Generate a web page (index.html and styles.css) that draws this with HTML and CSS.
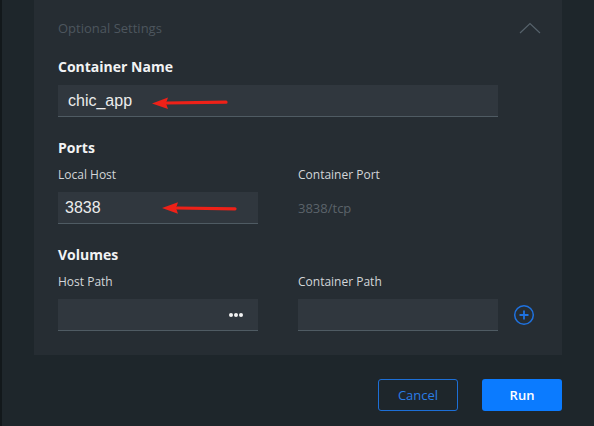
FILE: index.html
```html
<!DOCTYPE html>
<html>
<head>
<meta charset="utf-8">
<link rel="stylesheet" href="styles.css">
</head>
<body>
<div class="page">
  <div class="strip"></div>
  <div class="main">
    <section class="panel">
      <div class="panel-head">
        <span class="muted-title">Optional Settings</span>
        <svg class="chevron" width="22" height="12" viewBox="0 0 22 12"><path d="M1 11 L11 1.5 L21 11" fill="none" stroke="#56626b" stroke-width="1.2"/></svg>
      </div>

      <h3 class="heading first">Container Name</h3>
      <div class="field wide">
        <span class="value name">chic_app</span>
        <svg class="arrow a1" width="76" height="14" viewBox="0 0 76 14"><path d="M15 7 L74 6.2" stroke="#ee2118" stroke-width="3.2" stroke-linecap="round"/><path d="M0 7.5 L16 1.5 L14 7.2 L16 13 Z" fill="#ee2118"/></svg>
      </div>

      <h3 class="heading">Ports</h3>
      <div class="row">
        <div class="col">
          <div class="label">Local Host</div>
          <div class="field half">
            <span class="value port">3838</span>
            <svg class="arrow a2" width="76" height="14" viewBox="0 0 76 14"><path d="M15 7 L73 7.8" stroke="#ee2118" stroke-width="3.2" stroke-linecap="round"/><path d="M0 7 L16 1.2 L14 7 L16 12.8 Z" fill="#ee2118"/></svg>
          </div>
        </div>
        <div class="col">
          <div class="label">Container Port</div>
          <div class="static">3838/tcp</div>
        </div>
      </div>

      <h3 class="heading">Volumes</h3>
      <div class="row">
        <div class="col">
          <div class="label">Host Path</div>
          <div class="field half dots-field">
            <span class="dots"><i></i><i></i><i></i></span>
          </div>
        </div>
        <div class="col">
          <div class="label">Container Path</div>
          <div class="field half"></div>
        </div>
        <svg class="plus" width="22" height="22" viewBox="0 0 22 22"><circle cx="11" cy="11" r="9.3" fill="none" stroke="#1f72e0" stroke-width="1.5"/><path d="M11 6.5 V15.5 M6.5 11 H15.5" stroke="#1f72e0" stroke-width="1.8"/></svg>
      </div>
    </section>

    <div class="actions">
      <button class="btn cancel">Cancel</button>
      <button class="btn run">Run</button>
    </div>
  </div>
</div>
</body>
</html>
```

FILE: styles.css
```css
* { box-sizing: border-box; }
html, body { margin: 0; padding: 0; }
body {
  background: #1e262b;
  font-family: "Open Sans", "Noto Sans", sans-serif;
  width: 594px;
  height: 426px;
  overflow: hidden;
}
.page {
  display: flex;
  height: 426px;
}
.strip {
  width: 2px;
  background: #12181b;
}
.main {
  margin-left: 32px;
  width: 528px;
}
.panel {
  background: #262d33;
  padding: 18px 24px 24px 24px;
}
.panel-head {
  display: flex;
  justify-content: space-between;
  align-items: center;
  height: 20px;
}
.muted-title {
  font-size: 13px;
  color: #4d565e;
  line-height: 20px;
}
.chevron {
  margin-right: -3px;
  margin-top: -1px;
}
.heading {
  margin: 21px 0 0 0;
  font-size: 14px;
  font-weight: 700;
  line-height: 20px;
  color: #f2f3f4;
}
.heading.first { margin-top: 19px; }
.field {
  position: relative;
  height: 32px;
  background: #30373e;
  border-bottom: 1px solid #4f5b63;
  margin-top: 8px;
  display: flex;
  align-items: center;
}
.wide { width: 440px; }
.half { width: 200px; margin-top: 9px; }
.value {
  font-family: "Liberation Sans", Arial, sans-serif;
  font-size: 16px;
  color: #ececec;
}
.value.name { padding-left: 10px; }
.value.port { padding-left: 7px; }
.arrow { position: absolute; }
.a1 { left: 94px; top: 11px; }
.a2 { left: 104px; top: 9px; }
.row {
  display: flex;
  align-items: flex-end;
  gap: 40px;
}
.col { width: 200px; }
.label {
  margin-top: 9px;
  font-size: 12px;
  line-height: 16px;
  color: #d3d6d9;
}
.static {
  margin-top: 9px;
  height: 32px;
  line-height: 32px;
  font-size: 13px;
  color: #5b636a;
}
.dots-field { justify-content: flex-end; padding-right: 15px; }
.dots { display: flex; gap: 1px; }
.dots i {
  display: block;
  width: 4px;
  height: 4px;
  border-radius: 50%;
  background: #f2f2f2;
}
.plus {
  margin-left: -25px;
  margin-bottom: 5px;
}
.actions {
  display: flex;
  justify-content: flex-end;
  gap: 24px;
  margin-top: 24px;
}
.btn {
  width: 80px;
  height: 32px;
  border-radius: 3px;
  font-family: "Open Sans", "Noto Sans", sans-serif;
  font-size: 13px;
  cursor: pointer;
}
.cancel {
  background: transparent;
  border: 1px solid #1d6fd6;
  color: #2a7de6;
}
.run {
  background: #0b7bff;
  border: none;
  color: #ffffff;
  font-weight: 600;
}
```
